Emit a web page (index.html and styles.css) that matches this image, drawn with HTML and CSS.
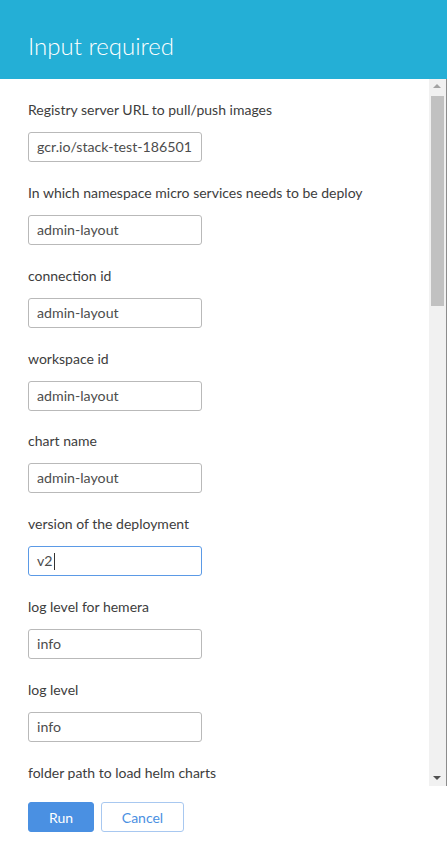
FILE: index.html
```html
<!DOCTYPE html>
<html>
<head>
<meta charset="utf-8">
<link rel="stylesheet" href="styles.css">
</head>
<body>
<div class="modal">
  <header class="modal-header"><h1>Input required</h1></header>
  <div class="modal-main">
    <div class="scroll-area">
      <div class="form">
        <div class="group"><label>Registry server URL to pull/push images</label><div class="field">gcr.io/stack-test-186501</div></div>
        <div class="group"><label>In which namespace micro services needs to be deploy</label><div class="field">admin-layout</div></div>
        <div class="group"><label>connection id</label><div class="field">admin-layout</div></div>
        <div class="group"><label>workspace id</label><div class="field">admin-layout</div></div>
        <div class="group"><label>chart name</label><div class="field">admin-layout</div></div>
        <div class="group"><label>version of the deployment</label><div class="field focused">v2<span class="caret"></span></div></div>
        <div class="group"><label>log level for hemera</label><div class="field">info</div></div>
        <div class="group"><label>log level</label><div class="field">info</div></div>
        <div class="group"><label>folder path to load helm charts</label></div>
      </div>
    </div>
    <div class="scrollbar">
      <div class="arrow up"></div>
      <div class="thumb"></div>
      <div class="track-rest"></div>
      <div class="arrow down"></div>
    </div>
  </div>
  <footer class="modal-footer">
    <button class="btn btn-primary">Run</button>
    <button class="btn btn-default">Cancel</button>
  </footer>
</div>
</body>
</html>
```

FILE: styles.css
```css
* { box-sizing: border-box; }
html, body { margin: 0; padding: 0; background: #fff; }
body {
  font-family: Lato, "Open Sans", "Liberation Sans", sans-serif;
  width: 447px;
  height: 864px;
  overflow: hidden;
}
.modal {
  display: flex;
  flex-direction: column;
  height: 864px;
}
.modal-header {
  height: 79px;
  background: #24afd6;
  display: flex;
  align-items: center;
  padding: 0 28px;
  flex: none;
}
.modal-header h1 {
  margin: 0;
  font-weight: 300;
  font-size: 24px;
  color: #fff;
  padding-top: 12px;
  letter-spacing: 0;
}
.modal-main {
  display: flex;
  height: 707px;
  flex: none;
  border-right: 1px solid #8c8c8c;
}
.scroll-area {
  flex: 1;
  overflow: hidden;
}
.form {
  padding: 21px 0 0 28px;
}
.group {
  height: 82.86px;
}
.group label {
  display: block;
  font-size: 14px;
  line-height: 20px;
  color: #3d3d3d;
  margin-bottom: 12px;
}
.field {
  width: 174px;
  height: 30px;
  border: 1px solid #b9b9b9;
  border-radius: 3px;
  padding: 0 0 0 8px;
  font-size: 14.2px;
  line-height: 28px;
  color: #4d4d4d;
  white-space: nowrap;
  overflow: hidden;
  display: flex;
  align-items: center;
}
.field.focused {
  border-color: #5b9ae6;
}
.caret {
  display: inline-block;
  width: 1px;
  height: 17px;
  background: #333;
  margin-left: 1px;
}
.scrollbar {
  width: 17px;
  background: #f1f1f1;
  display: flex;
  flex-direction: column;
  align-items: center;
  flex: none;
}
.arrow {
  height: 17px;
  width: 17px;
  position: relative;
  flex: none;
}
.arrow.up::after, .arrow.down::after {
  content: "";
  position: absolute;
  left: 4px;
  width: 0;
  height: 0;
  border-left: 4px solid transparent;
  border-right: 4px solid transparent;
}
.arrow.up::after {
  top: 5px;
  border-bottom: 4px solid #a3a3a3;
}
.arrow.down::after {
  top: 7px;
  border-top: 4px solid #505050;
}
.thumb {
  width: 13px;
  height: 210px;
  background: #c1c1c1;
  flex: none;
}
.track-rest { flex: 1; }
.modal-footer {
  flex: 1;
  padding: 16px 28px 0;
  display: flex;
  align-items: flex-start;
  gap: 7px;
}
.btn {
  font-family: Lato, "Open Sans", "Liberation Sans", sans-serif;
  font-size: 14px;
  height: 30px;
  border-radius: 3px;
  padding: 0;
  cursor: pointer;
}
.btn-primary {
  width: 66px;
  background: #4a90e2;
  border: 1px solid #4a90e2;
  color: #fff;
}
.btn-default {
  width: 83px;
  background: #fff;
  border: 1px solid #a8c8f0;
  color: #4a90e2;
}
```
